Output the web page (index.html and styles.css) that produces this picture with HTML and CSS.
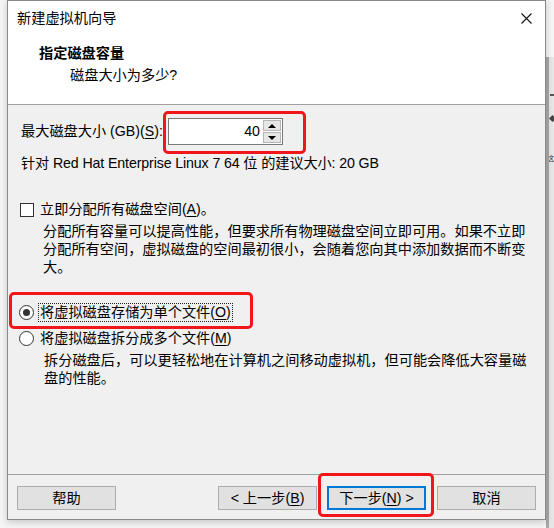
FILE: index.html
```html
<!DOCTYPE html>
<html lang="zh-CN">
<head>
<meta charset="utf-8">
<title>新建虚拟机向导</title>
<link rel="stylesheet" href="styles.css">
</head>
<body>
<div class="bgwin">
  <span class="bg-dash"></span>
  <span class="bg-diamond"></span>
  <span class="bg-text">这</span>
</div>
<div class="window">
  <div class="titlebar">
    <span class="title">新建虚拟机向导</span>
    <svg class="close" width="11" height="11" viewBox="0 0 11 11"><path d="M0.5 0.5 L10.5 10.5 M10.5 0.5 L0.5 10.5" stroke="#111" stroke-width="1.1" fill="none"/></svg>
  </div>
  <div class="header">
    <div class="h-title">指定磁盘容量</div>
    <div class="h-sub">磁盘大小为多少?</div>
  </div>
  <div class="content">
    <div class="size-row">
      <span class="size-label">最大磁盘大小 (GB)(<u>S</u>):</span>
      <div class="spin">
        <div class="spin-input">40</div>
        <div class="spin-btns">
          <div class="sb"><span class="arrow-up"></span></div>
          <div class="sb"><span class="arrow-down"></span></div>
        </div>
      </div>
    </div>
    <div class="rec">针对 Red Hat Enterprise Linux 7 64 位 的建议大小: 20 GB</div>
    <div class="check-row">
      <span class="checkbox"></span>
      <span class="opt-label">立即分配所有磁盘空间(<u>A</u>)。</span>
    </div>
    <div class="desc">分配所有容量可以提高性能，但要求所有物理磁盘空间立即可用。如果不立即<br>分配所有空间，虚拟磁盘的空间最初很小，会随着您向其中添加数据而不断变<br>大。</div>
    <div class="radio-row first">
      <span class="radio checked"></span>
      <span class="radio-label focus">将虚拟磁盘存储为单个文件(<u>O</u>)</span>
    </div>
    <div class="radio-row second">
      <span class="radio"></span>
      <span class="radio-label">将虚拟磁盘拆分成多个文件(<u>M</u>)</span>
    </div>
    <div class="desc desc2">拆分磁盘后，可以更轻松地在计算机之间移动虚拟机，但可能会降低大容量磁<br>盘的性能。</div>
  </div>
  <div class="footer">
    <div class="btn">帮助</div>
    <div class="btn btn-back">&lt; 上一步(<u>B</u>)</div>
    <div class="btn btn-next">下一步(<u>N</u>) &gt;</div>
    <div class="btn btn-cancel">取消</div>
  </div>
</div>
<div class="mark mark-spin"></div>
<div class="mark mark-radio"></div>
<div class="mark mark-next"></div>
</body>
</html>
```
FILE: styles.css
```css
* { box-sizing: border-box; }
html, body { margin: 0; padding: 0; }
body {
  width: 554px;
  height: 528px;
  overflow: hidden;
  position: relative;
  background: #f5f5f5;
  font-family: "Liberation Sans", "Noto Sans CJK SC", sans-serif;
  font-size: 14.2px;
  line-height: 19px;
  color: #000;
}
u { text-underline-offset: 2px; }

.bgwin {
  position: absolute;
  left: 546px;
  top: 57px;
  right: 0;
  bottom: 0;
  background: #e6e6e6;
  border-left: 3px solid #a9a9a9;
  overflow: hidden;
}
.bg-dash {
  position: absolute;
  left: 1px;
  top: 37px;
  width: 4px;
  height: 2px;
  background: #555;
}
.bg-diamond {
  position: absolute;
  left: 1px;
  top: 59px;
  width: 5px;
  height: 5px;
  background: #444;
  transform: rotate(45deg);
}
.bg-text {
  position: absolute;
  left: -2px;
  top: 97px;
  font-family: "Noto Sans CJK SC", sans-serif;
  font-size: 7px;
  line-height: 9px;
  color: #333;
}

.window {
  margin-left: 7px;
  width: 539px;
  height: 520px;
  border: 1px solid #8a8a8a;
  background: #f0f0f0;
  display: flex;
  flex-direction: column;
  position: relative;
  box-shadow: 0 2px 7px rgba(0, 0, 0, 0.2);
}

.titlebar {
  height: 37px;
  padding: 8px 13px 0 9px;
  background: #fff;
  display: flex;
  justify-content: space-between;
  align-items: flex-start;
}
.title { display: block; }
.close { display: block; margin-top: 4px; }

.header {
  height: 67px;
  background: #fff;
  border-bottom: 1px solid #a0a0a0;
  padding: 6px 0 0 31px;
}
.h-title { font-weight: 700; }
.h-sub { margin-top: 3px; padding-left: 31px; }

.content {
  flex: 1;
  padding: 13px 0 0 13px;
}

.size-row {
  display: flex;
  align-items: center;
  height: 27px;
}
.size-label { width: 147px; white-space: nowrap; }
.spin {
  width: 115px;
  height: 27px;
  display: flex;
  border: 1px solid #7a7a7a;
  background: #fff;
}
.spin-input {
  flex: 1;
  text-align: right;
  padding-right: 2px;
  line-height: 25px;
}
.spin-btns {
  width: 20px;
  display: flex;
  flex-direction: column;
  gap: 1px;
  padding: 1px;
  background: #fff;
}
.sb {
  flex: 1;
  background: #e6e6e6;
  border: 1px solid #b5b5b5;
  display: flex;
  align-items: center;
  justify-content: center;
}
.arrow-up, .arrow-down {
  width: 0;
  height: 0;
  border-left: 4px solid transparent;
  border-right: 4px solid transparent;
}
.arrow-up { border-bottom: 4px solid #000; }
.arrow-down { border-top: 4px solid #000; }

.rec { margin-top: 9px; white-space: nowrap; letter-spacing: -0.12px; }

.check-row {
  margin-top: 27px;
  display: flex;
  align-items: center;
  height: 19px;
}
.checkbox {
  width: 14px;
  height: 14px;
  margin-left: -1px;
  border: 1px solid #333;
  background: #fff;
}
.opt-label { margin-left: 6px; }

.desc {
  margin-top: 3px;
  padding-left: 22px;
  white-space: nowrap;
  line-height: 18px;
}
.desc2 { margin-top: 3px; padding-left: 23px; }

.radio-row {
  display: flex;
  align-items: center;
  height: 19px;
}
.radio-row.first { margin-top: 27px; }
.radio-row.second { margin-top: 7px; }
.radio {
  width: 15px;
  height: 15px;
  margin-left: -2px;
  border: 1px solid #333;
  border-radius: 50%;
  background: #fff;
  display: flex;
  align-items: center;
  justify-content: center;
}
.radio.checked::after {
  content: "";
  width: 7px;
  height: 7px;
  border-radius: 50%;
  background: #333;
}
.radio-label {
  margin-left: 5px;
  display: inline-block;
  line-height: 17px;
  height: 17px;
  padding: 0 1px;
}
.radio-label.focus { outline: 1px dotted #222; }

.footer {
  border-top: 1px solid #a0a0a0;
  padding: 11px 9px 9px 9px;
  display: flex;
}
.btn {
  width: 99px;
  height: 24px;
  border: 1px solid #adadad;
  background: #e1e1e1;
  display: flex;
  align-items: center;
  justify-content: center;
  white-space: nowrap;
}
.btn-back { margin-left: auto; }
.btn-next {
  margin-left: 10px;
  border-color: #0078d7;
  box-shadow: inset 0 0 0 1px #0078d7;
}
.btn-cancel { margin-left: 11px; }

.mark {
  position: absolute;
  border: 3px solid #f2161b;
  border-radius: 5px;
}
.mark-spin { left: 163px; top: 111px; width: 143px; height: 43px; }
.mark-radio { left: 9px; top: 292px; width: 244px; height: 37px; }
.mark-next { left: 318px; top: 473px; width: 116px; height: 44px; }
```
